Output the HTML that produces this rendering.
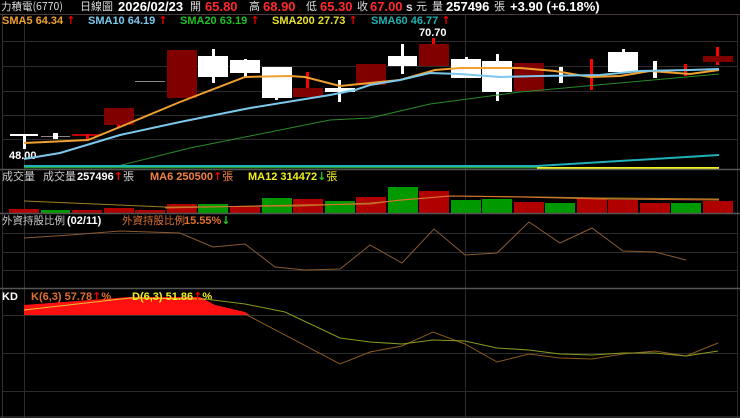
<!DOCTYPE html>
<html><head><meta charset="utf-8"><style>
html,body{margin:0;padding:0;background:#000;width:740px;height:418px;overflow:hidden}
svg text{font-family:"Liberation Sans","Noto Sans CJK TC",sans-serif;font-weight:bold;font-size:11px}
.c{font-family:"Noto Sans CJK TC","WenQuanYi Zen Hei",serif;font-weight:normal}
.a{font-family:"DejaVu Sans",sans-serif;font-weight:bold;font-size:11px}
</style></head><body>
<svg width="740" height="418" xmlns="http://www.w3.org/2000/svg">
<rect width="740" height="418" fill="#000"/>
<!-- header -->
<text x="1" y="10" fill="#ddd" class="c" style="font-size:10.5px">力積電(6770)</text>
<text x="80" y="10" fill="#ddd" class="c" style="font-size:11px">日線圖</text>
<text x="118" y="11" fill="#fff" style="font-size:13px">2026/02/23</text>
<text x="190" y="10" fill="#ddd" class="c" style="font-size:11px">開</text>
<text x="205" y="11" fill="#ff2a2a" style="font-size:13px">65.80</text>
<text x="249" y="10" fill="#ddd" class="c" style="font-size:11px">高</text>
<text x="263" y="11" fill="#ff2a2a" style="font-size:13px">68.90</text>
<text x="306" y="10" fill="#ddd" class="c" style="font-size:11px">低</text>
<text x="320" y="11" fill="#ff2a2a" style="font-size:13px">65.30</text>
<text x="357" y="10" fill="#ddd" class="c" style="font-size:11px">收</text>
<text x="370" y="11" fill="#ff2a2a" style="font-size:13px">67.00</text>
<text x="406" y="11" fill="#ddd" style="font-size:12px">s</text>
<text x="416" y="10" fill="#ddd" class="c" style="font-size:11px">元</text>
<text x="432" y="10" fill="#ddd" class="c" style="font-size:11px">量</text>
<text x="446" y="11" fill="#fff" style="font-size:13px">257496</text>
<text x="494" y="10" fill="#ddd" class="c" style="font-size:11px">張</text>
<text x="510" y="11" fill="#fff" style="font-size:13px">+3.90 (+6.18%)</text>
<line x1="0" y1="14.5" x2="740" y2="14.5" stroke="#4a3a40" stroke-width="1"/>
<!-- borders -->
<line x1="2.5" y1="15" x2="2.5" y2="418" stroke="#3a2a3a"/>
<line x1="737.5" y1="15" x2="737.5" y2="418" stroke="#2a2a2a"/>
<!-- main grid -->
<g stroke="#2c2c2c" stroke-width="1">
<line x1="3" y1="41.5" x2="737" y2="41.5"/><line x1="3" y1="66.5" x2="737" y2="66.5"/>
<line x1="3" y1="91.5" x2="737" y2="91.5"/><line x1="3" y1="115.5" x2="737" y2="115.5"/>
<line x1="3" y1="139.5" x2="737" y2="139.5"/>
<line x1="24.5" y1="15" x2="24.5" y2="418"/><line x1="465.5" y1="15" x2="465.5" y2="418"/>
</g>
<text x="2" y="24" fill="#f0a030">SMA5 64.34 <tspan class="a" fill="#e00">↑</tspan></text>
<text x="88" y="24" fill="#7cc8ec">SMA10 64.19 <tspan class="a" fill="#e00">↑</tspan></text>
<text x="180" y="24" fill="#20c020">SMA20 63.19 <tspan class="a" fill="#e00">↑</tspan></text>
<text x="272" y="24" fill="#e8e030">SMA200 27.73 <tspan class="a" fill="#e00">↑</tspan></text>
<text x="371" y="24" fill="#20b0b0">SMA60 46.77 <tspan class="a" fill="#e00">↑</tspan></text>
<!-- candles -->
<g>
<rect x="10" y="134" width="28" height="2" fill="#fff"/><rect x="23" y="134" width="3" height="15" fill="#fff"/>
<rect x="41" y="136" width="29" height="1" fill="#888"/><rect x="53" y="133" width="5" height="6" fill="#fff"/>
<rect x="72" y="134" width="30" height="2" fill="#c00000"/><rect x="86" y="134" width="3" height="5" fill="#f00"/>
<rect x="104" y="108" width="30" height="17" fill="#800000"/><rect x="117" y="125" width="3" height="3" fill="#f00"/>
<rect x="135" y="81" width="30" height="1" fill="#888"/>
<rect x="167" y="50" width="30" height="48" fill="#800000"/>
<rect x="212" y="49" width="3" height="34" fill="#fff"/><rect x="198" y="56" width="30" height="21" fill="#fff"/>
<rect x="244" y="59" width="3" height="19" fill="#fff"/><rect x="230" y="60" width="30" height="13" fill="#fff"/>
<rect x="262" y="67" width="30" height="31" fill="#fff"/><rect x="275" y="97" width="3" height="3" fill="#fff"/>
<rect x="306" y="72" width="3" height="16" fill="#f00"/><rect x="293" y="88" width="30" height="9" fill="#800000"/>
<rect x="338" y="80" width="3" height="22" fill="#fff"/><rect x="325" y="88" width="30" height="4" fill="#fff"/>
<rect x="356" y="64" width="30" height="21" fill="#800000"/>
<rect x="401" y="44" width="3" height="30" fill="#fff"/><rect x="388" y="56" width="29" height="10" fill="#fff"/>
<rect x="432" y="38" width="3" height="7" fill="#f00"/><rect x="419" y="44" width="30" height="22" fill="#800000"/>
<rect x="465" y="57" width="3" height="3" fill="#fff"/><rect x="451" y="59" width="30" height="19" fill="#fff"/>
<rect x="496" y="54" width="3" height="47" fill="#fff"/><rect x="482" y="61" width="30" height="31" fill="#fff"/>
<rect x="514" y="63" width="30" height="28" fill="#800000"/>
<rect x="559" y="67" width="4" height="16" fill="#fff"/>
<rect x="590" y="59" width="3" height="31" fill="#f00"/>
<rect x="622" y="49" width="3" height="4" fill="#fff"/><rect x="608" y="52" width="30" height="20" fill="#fff"/>
<rect x="653" y="61" width="4" height="17" fill="#fff"/>
<rect x="684" y="64" width="3" height="12" fill="#f00"/>
<rect x="716" y="47" width="3" height="18" fill="#f00"/><rect x="703" y="56" width="30" height="6" fill="#800000"/>
</g>
<text x="419" y="36" fill="#fff">70.70</text>
<text x="9" y="159" fill="#fff">48.00</text>
<!-- MAs -->
<polyline fill="none" stroke="#2a8a2a" stroke-width="1" points="110,168 190,148 330,120 370,118 430,104 520,92 719,74"/>
<polyline fill="none" stroke="#f0a030" stroke-width="2" points="24,143 88,140 120,127 180,102 245,77 290,76 305,77 340,86 370,83 400,80 435,70 460,68 520,68 555,71 590,77 620,76 650,71 690,74 719,70"/>
<polyline fill="none" stroke="#7cc8ec" stroke-width="2" points="24,159 60,153 120,135 180,122 250,108 330,95 355,90 370,85 400,80 430,73 460,74 500,77 540,76 600,75 640,71 690,70 719,69"/>
<line x1="24" y1="167.5" x2="540" y2="167.5" stroke="#30a030" stroke-width="1.5"/>
<line x1="537" y1="168" x2="719" y2="168" stroke="#f0f020" stroke-width="2"/>
<polyline fill="none" stroke="#20b0b8" stroke-width="2" points="24,166 537,166 719,155"/>
<line x1="0" y1="169.5" x2="740" y2="169.5" stroke="#555" stroke-width="1.5"/>
<!-- volume -->
<text x="2" y="180" fill="#ccc" class="c" style="font-size:11px">成交量</text>
<text x="43" y="180" fill="#ccc" class="c" style="font-size:11px">成交量</text>
<text x="77" y="180" fill="#fff">257496<tspan class="a" fill="#e00">↑</tspan><tspan fill="#ccc" class="c">張</tspan></text>
<text x="150" y="180" fill="#f08040">MA6 250500<tspan class="a" fill="#e00">↑</tspan><tspan class="c">張</tspan></text>
<text x="248" y="180" fill="#f0f020">MA12 314472<tspan class="a" fill="#2c2">↓</tspan><tspan class="c">張</tspan></text>
<g>
<rect x="9" y="209" width="30" height="4" fill="#b00000"/><rect x="41" y="210" width="29" height="3" fill="#009a00"/>
<rect x="72" y="210" width="30" height="3" fill="#b00000"/><rect x="104" y="208" width="30" height="5" fill="#b00000"/>
<rect x="135" y="210" width="30" height="3" fill="#b00000"/><rect x="167" y="204" width="30" height="9" fill="#b00000"/>
<rect x="198" y="204" width="30" height="9" fill="#009a00"/><rect x="230" y="207" width="30" height="6" fill="#b00000"/>
<rect x="262" y="198" width="30" height="15" fill="#009a00"/><rect x="293" y="199" width="30" height="14" fill="#b00000"/>
<rect x="325" y="201" width="30" height="12" fill="#009a00"/><rect x="356" y="197" width="30" height="16" fill="#b00000"/>
<rect x="388" y="187" width="30" height="26" fill="#009a00"/><rect x="419" y="191" width="30" height="22" fill="#b00000"/>
<rect x="451" y="200" width="30" height="13" fill="#009a00"/><rect x="482" y="199" width="30" height="14" fill="#009a00"/>
<rect x="514" y="202" width="30" height="11" fill="#b00000"/><rect x="545" y="203" width="30" height="10" fill="#009a00"/>
<rect x="577" y="198" width="30" height="15" fill="#b00000"/><rect x="608" y="200" width="30" height="13" fill="#b00000"/>
<rect x="640" y="203" width="30" height="10" fill="#b00000"/><rect x="671" y="203" width="30" height="10" fill="#009a00"/>
<rect x="703" y="201" width="30" height="12" fill="#b00000"/>
</g>
<polyline fill="none" stroke="#a08020" stroke-width="1" points="24,201 165,207 300,206 370,203 450,196 540,197 600,198 719,199"/>
<polyline fill="none" stroke="#e07030" stroke-width="1" points="165,208 300,205 370,204 400,200 450,196 520,197 600,199 719,200"/>
<line x1="0" y1="213.5" x2="740" y2="213.5" stroke="#555" stroke-width="1.5"/>
<!-- foreign -->
<g stroke="#2c2c2c"><line x1="3" y1="233.5" x2="737" y2="233.5"/><line x1="3" y1="252.5" x2="737" y2="252.5"/><line x1="3" y1="270.5" x2="737" y2="270.5"/></g>
<text x="2" y="224" fill="#ccc" class="c" style="font-size:10.5px">外資持股比例</text>
<text x="67" y="224" fill="#fff">(02/11)</text>
<text x="122" y="224" fill="#e07030" class="c" style="font-size:10.5px">外資持股比例</text>
<text x="184" y="224" fill="#e07030">15.55%<tspan class="a" fill="#2c2">↓</tspan></text>
<polyline fill="none" stroke="#8a5a30" stroke-width="1" points="24,238 70,235 120,231 180,233 213,247 245,244 275,267 305,270 340,269 370,245 402,263 434,229 465,255 497,253 529,222 560,243 592,228 623,251 655,252 686,260"/>
<line x1="0" y1="288.5" x2="740" y2="288.5" stroke="#555" stroke-width="1.5"/>
<!-- KD -->
<g stroke="#2c2c2c"><line x1="3" y1="315.5" x2="737" y2="315.5"/><line x1="3" y1="353.5" x2="737" y2="353.5"/><line x1="3" y1="391.5" x2="737" y2="391.5"/></g>
<polygon fill="#ff1010" points="24,305 130,297 200,297 215,305 245,312 250,315 24,315"/>
<polyline fill="none" stroke="#e8c030" stroke-width="1" points="24,310 130,298 205,299"/>
<text x="2" y="300" fill="#fff">KD</text>
<text x="31" y="300" fill="#e07030">K(6,3) 57.78<tspan class="a" fill="#e00">↑</tspan>%</text>
<text x="132" y="300" fill="#f0f020">D(6,3) 51.86<tspan class="a" fill="#e00">↑</tspan>%</text>
<polyline fill="none" stroke="#8a5a20" stroke-width="1" points="245,314 340,364 370,352 402,346 433,332 465,344 497,362 529,354 560,358 592,359 623,354 655,351 686,356 718,343"/>
<polyline fill="none" stroke="#8a9a20" stroke-width="1" points="205,299 245,304 285,312 340,338 370,342 402,344 433,340 465,341 497,348 529,350 560,354 592,355 623,353 655,353 686,356 718,351"/>
<line x1="0" y1="417" x2="740" y2="417" stroke="#444" stroke-width="1"/>
</svg>
</body></html>
